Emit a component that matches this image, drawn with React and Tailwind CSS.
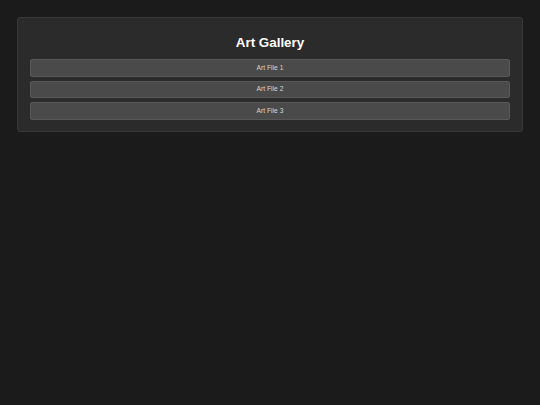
import React from "react";

const files = ["Art File 1", "Art File 2", "Art File 3"];

const App = () => {
    return (
        <div className="min-h-[405px] bg-[#1b1b1b] pt-[17px] px-[17px] font-['Liberation_Sans',Arial,sans-serif]">
            <div className="bg-[#2b2b2b] border border-[#383838] rounded-[3px] px-[12px] pt-[12px] pb-[11px]">
                <h1 className="mt-[5px] mb-[8px] text-center text-white font-bold text-[13.4px] leading-[16px]">
                    Art Gallery
                </h1>
                <div className="flex flex-col gap-[4px]">
                    {files.map((name) => (
                        <button
                            key={name}
                            className="h-[17.5px] w-full bg-[#4a4a4a] border border-[#585858] rounded-[2px] text-[#d6d6d6] text-[6.7px] leading-none pt-[1px]"
                        >
                            {name}
                        </button>
                    ))}
                </div>
            </div>
        </div>
    );
};

export default App;
